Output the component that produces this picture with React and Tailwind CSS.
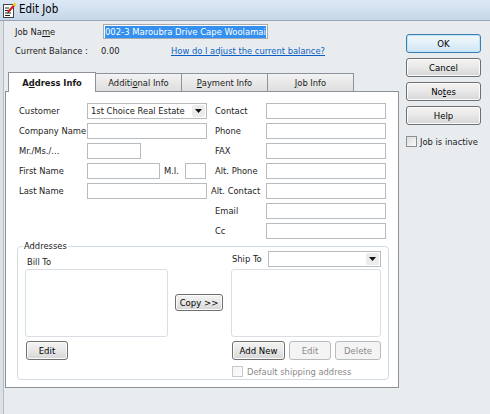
import React from 'react';

const fontCls = "font-['DejaVu_Sans_Condensed','Liberation_Sans',sans-serif]";

function Btn({ children, className = '', primary = false, disabled = false }) {
    const tone = primary
        ? 'border-[#3c7fb1] shadow-[inset_0_0_0_1px_#bfe4f8] bg-linear-to-b from-[#f2f8fc] via-[#e3f0f9] to-[#cfe4f3] text-black'
        : disabled
            ? 'border-[#b9bcbf] bg-[#f4f4f4] text-[#8a8a8a]'
            : 'border-[#707070] shadow-[inset_0_0_0_1px_#fbfbfb] bg-linear-to-b from-[#f3f3f3] via-[#e8e8e8] to-[#d6d6d6] text-black';
    return (
        <div className={`flex items-center justify-center rounded-[3px] border text-[9.5px] leading-none ${tone} ${className}`}>
            {children}
        </div>
    );
}

function Field({ className = '' }) {
    return <div className={`h-[16px] border border-[#b7bcc1] bg-white ${className}`} />;
}

function Combo({ value = '', className = '' }) {
    return (
        <div className={`flex h-[16px] items-center border border-[#b7bcc1] bg-white ${className}`}>
            <span className="flex-1 pl-[3px] text-[9.3px] leading-none whitespace-nowrap overflow-hidden">{value}</span>
            <span className="mr-[1px] flex h-[12px] w-[13px] items-center justify-center rounded-[2px] bg-[#ececec]">
                <svg width="7" height="4" viewBox="0 0 7 4"><path d="M0 0h7L3.5 4z" fill="#111" /></svg>
            </span>
        </div>
    );
}

function Check({ disabled = false }) {
    return (
        <div className={`h-[11px] w-[11px] border bg-linear-to-br ${disabled ? 'border-[#c6c9cc] from-[#f4f4f4] to-[#fbfbfb]' : 'border-[#8e8f8f] from-[#dcdcdc] to-[#fafafa]'}`} />
    );
}

function Row({ label, children, labelCls = 'w-[68px]' }) {
    return (
        <div className="flex h-[16px] items-center">
            <span className={`${labelCls} text-[9.3px] leading-none whitespace-nowrap`}>{label}</span>
            {children}
        </div>
    );
}

export default function App() {
    const rightRows = ['Contact', 'Phone', 'FAX', 'Alt. Phone', 'Alt. Contact', 'Email', 'Cc'];

    return (
        <div className={`${fontCls} flex h-[414px] w-[490px] flex-col overflow-hidden bg-[#e9ecef] text-[#1a1a1a]`}>
            {/* title bar */}
            <div className="flex h-[21px] shrink-0 items-center border-b border-[#9aa5b1] bg-linear-to-b from-[#dde8f4] to-[#c6d7ea] pl-[2px]">
                <svg width="15" height="17" viewBox="0 0 15 17">
                    <rect x="1.5" y="2.5" width="10" height="13" fill="#fff" stroke="#444" />
                    <path d="M3 6h4M3 8.5h6M3 11h6M3 13.5h5" stroke="#222" strokeWidth="1" />
                    <path d="M6 10L12.5 3" stroke="#d42020" strokeWidth="2.2" />
                    <path d="M11.5 3.5L13.5 1.5" stroke="#f0d020" strokeWidth="2.6" />
                    <path d="M5 11.5l1.2-2 1 1z" fill="#333" />
                </svg>
                <span className="ml-[2px] text-[11.5px] leading-none text-black">Edit Job</span>
            </div>

            <div className="flex flex-1">
                {/* window frame */}
                <div className="w-[4px] shrink-0 border-r border-[#b7bec6] bg-[#dce1e6]" />

                {/* main column */}
                <div className="flex w-[396px] shrink-0 flex-col">
                    <div className="mt-[3px] flex h-[15px] items-center">
                        <span className="w-[99px] pl-[11px] text-[9.3px] leading-none">
                            Job Na<span className="underline">m</span>e
                        </span>
                        <div className="flex h-[15px] w-[165px] items-center overflow-hidden border border-[#a6abb1] bg-white px-[1px]">
                            <span className="flex h-[12px] w-full items-center overflow-hidden whitespace-nowrap bg-[#3390f0] text-[9.4px] leading-none text-white">
                                002-3 Maroubra Drive Cape Woolamai
                            </span>
                        </div>
                    </div>

                    <div className="mt-[4px] flex h-[16px] items-center text-[9.3px] leading-none">
                        <span className="w-[97px] pl-[11px] whitespace-nowrap">Current Balance :</span>
                        <span className="w-[70px]">0.00</span>
                        <span className="text-[#0a5fc4] underline whitespace-nowrap">How do I adjust the current balance?</span>
                    </div>

                    {/* tabs */}
                    <div className="mt-[13px] flex h-[19px] items-end pl-[4px] text-[9.3px] leading-none">
                        <div className="relative z-10 -mb-[1px] flex h-[20px] w-[88px] items-center justify-center border border-b-0 border-[#8d9199] bg-white font-bold">
                            A<span className="underline">d</span>dress Info
                        </div>
                        <div className="-ml-[1px] flex h-[18px] w-[87px] items-center justify-center border border-b-0 border-[#8d9199] bg-linear-to-b from-[#f3f3f3] to-[#dedede]">
                            Additi<span className="underline">o</span>nal Info
                        </div>
                        <div className="-ml-[1px] flex h-[18px] w-[87px] items-center justify-center border border-b-0 border-[#8d9199] bg-linear-to-b from-[#f3f3f3] to-[#dedede]">
                            <span className="underline">P</span>ayment Info
                        </div>
                        <div className="-ml-[1px] flex h-[18px] w-[87px] items-center justify-center border border-b-0 border-[#8d9199] bg-linear-to-b from-[#f3f3f3] to-[#dedede]">
                            <span className="underline">J</span>ob Info
                        </div>
                    </div>

                    {/* tab panel */}
                    <div className="ml-[1px] flex h-[297px] w-[394px] flex-col border border-[#8d9199] bg-white">
                        <div className="mt-[11px] flex">
                            <div className="ml-[13px] flex flex-col gap-[4px]">
                                <Row label="Customer"><Combo value="1st Choice Real Estate" className="w-[120px]" /></Row>
                                <Row label="Company Name"><Field className="w-[120px]" /></Row>
                                <Row label="Mr./Ms./..."><Field className="w-[54px]" /></Row>
                                <Row label="First Name">
                                    <Field className="w-[73px]" />
                                    <span className="ml-[4px] w-[21px] text-[9.3px] leading-none">M.I.</span>
                                    <Field className="w-[21px]" />
                                </Row>
                                <Row label="Last Name"><Field className="w-[120px]" /></Row>
                            </div>
                            <div className="ml-[8px] flex flex-col gap-[4px]">
                                {rightRows.map(r => (
                                    <Row key={r} label={r} labelCls={r === 'Alt. Contact' ? '-ml-[4px] w-[55px]' : 'w-[51px]'}>
                                        <Field className="w-[120px]" />
                                    </Row>
                                ))}
                            </div>
                        </div>

                        <fieldset className="mt-[1px] ml-[11px] flex w-[372px] rounded-[4px] border border-[#d3dbe2] pb-[2px] pl-[7px]">
                            <legend className="-ml-[2px] px-[1px] text-[9.3px] leading-[12px]">Addresses</legend>
                            <div className="mt-[2px] flex w-[143px] flex-col">
                                <span className="flex h-[15px] items-center pl-[2px] text-[9.3px] leading-none">Bill To</span>
                                <div className="h-[68px] rounded-[3px] border border-[#d8dee4] bg-white" />
                                <Btn className="mt-[4px] ml-[1px] h-[19px] w-[42px]">Edit</Btn>
                            </div>
                            <div className="ml-[7px] mt-[42px]">
                                <Btn className="h-[17px] w-[48px]">Copy &gt;&gt;</Btn>
                            </div>
                            <div className="-mt-[1px] ml-[8px] flex w-[150px] flex-col">
                                <div className="flex h-[16px] items-center">
                                    <span className="w-[37px] pl-[1px] text-[9.3px] leading-none whitespace-nowrap">Ship To</span>
                                    <Combo className="w-[113px]" />
                                </div>
                                <div className="mt-[2px] h-[68px] rounded-[3px] border border-[#d8dee4] bg-white" />
                                <div className="mt-[4px] flex">
                                    <Btn className="ml-[1px] h-[19px] w-[53px]">Add New</Btn>
                                    <Btn disabled className="ml-[4px] h-[19px] w-[42px]">Edit</Btn>
                                    <Btn disabled className="ml-[4px] h-[19px] w-[46px]">Delete</Btn>
                                </div>
                                <div className="mt-[6px] flex items-center pl-[1px]">
                                    <Check disabled />
                                    <span className="ml-[4px] text-[9.3px] leading-none text-[#8a8a8a]">Default shipping address</span>
                                </div>
                            </div>
                        </fieldset>
                    </div>
                </div>

                {/* right buttons */}
                <div className="ml-[6px] mt-[13px] flex w-[75px] flex-col">
                    <Btn primary className="h-[19px]">OK</Btn>
                    <Btn className="mt-[5px] h-[19px]">Cancel</Btn>
                    <Btn className="mt-[5px] h-[19px]">No<span className="underline">t</span>es</Btn>
                    <Btn className="mt-[5px] h-[19px]">Help</Btn>
                    <div className="mt-[11px] flex items-center">
                        <Check />
                        <span className="ml-[3px] text-[9.3px] leading-none whitespace-nowrap">Job is inactive</span>
                    </div>
                </div>
            </div>
        </div>
    );
}
